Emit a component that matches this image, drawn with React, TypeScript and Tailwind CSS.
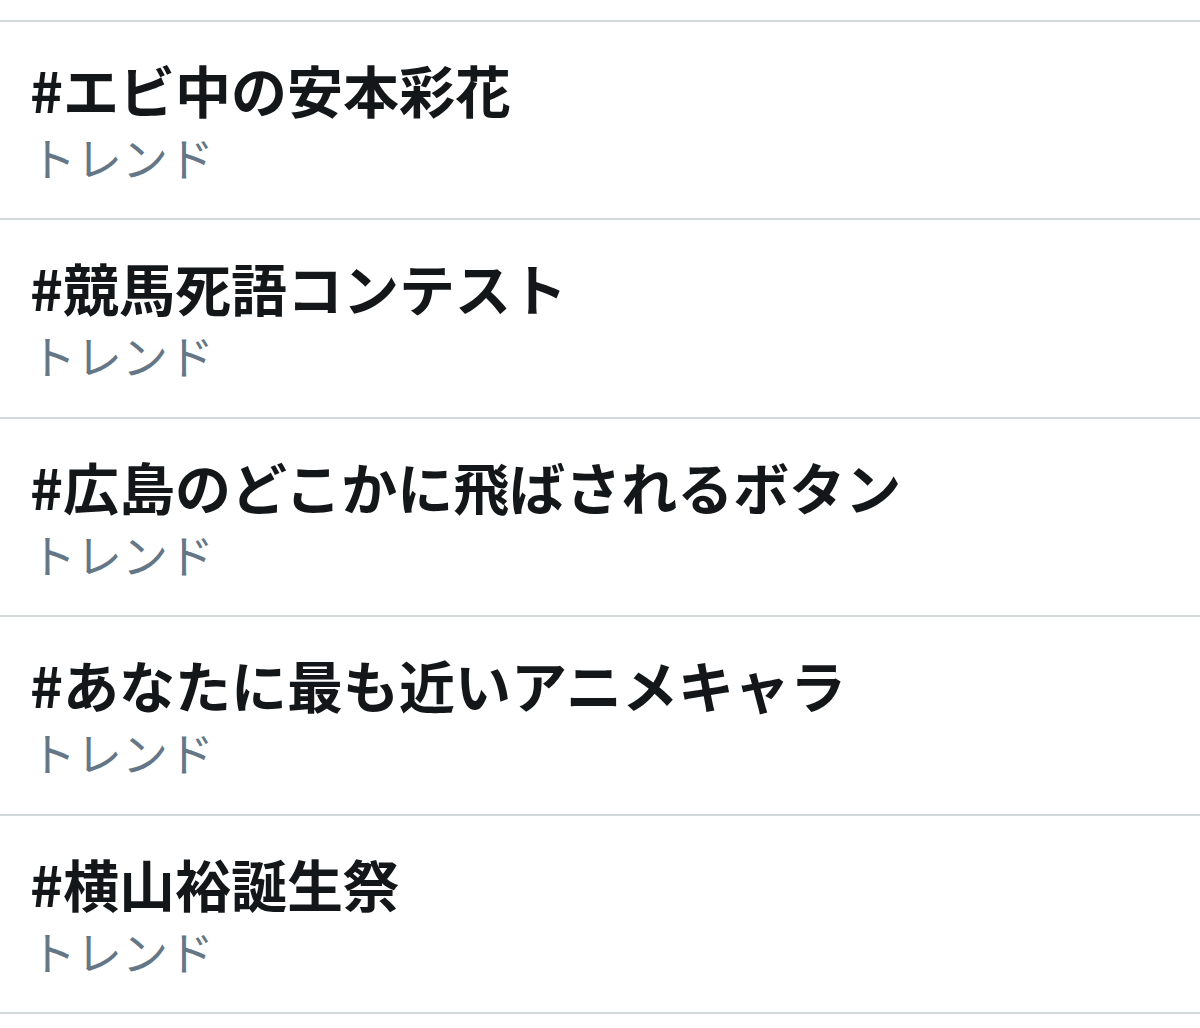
const trends = [
  '#エビ中の安本彩花',
  '#競馬死語コンテスト',
  '#広島のどこかに飛ばされるボタン',
  '#あなたに最も近いアニメキャラ',
  '#横山裕誕生祭',
]

const TrendRow = ({ title }: { title: string }) => {
  return (
    <div className="h-[198.4px] border-b-2 border-[#d3d8db] pl-[30px] pt-[35px]">
      <p className="text-[56px] leading-[64px] font-bold text-[#14171a]">{title}</p>
      <p className="mt-[10px] text-[46px] leading-[50px] text-[#657786]">トレンド</p>
    </div>
  )
}

export default function App() {
  return (
    <div
      className="w-[1200px] h-[1028px] overflow-hidden bg-white"
      style={{ fontFamily: '"Noto Sans CJK JP", "Noto Sans", sans-serif' }}
    >
      <div className="h-[22px] border-b-2 border-[#d3d8db]" />
      {trends.map((t) => (
        <TrendRow key={t} title={t} />
      ))}
    </div>
  )
}
